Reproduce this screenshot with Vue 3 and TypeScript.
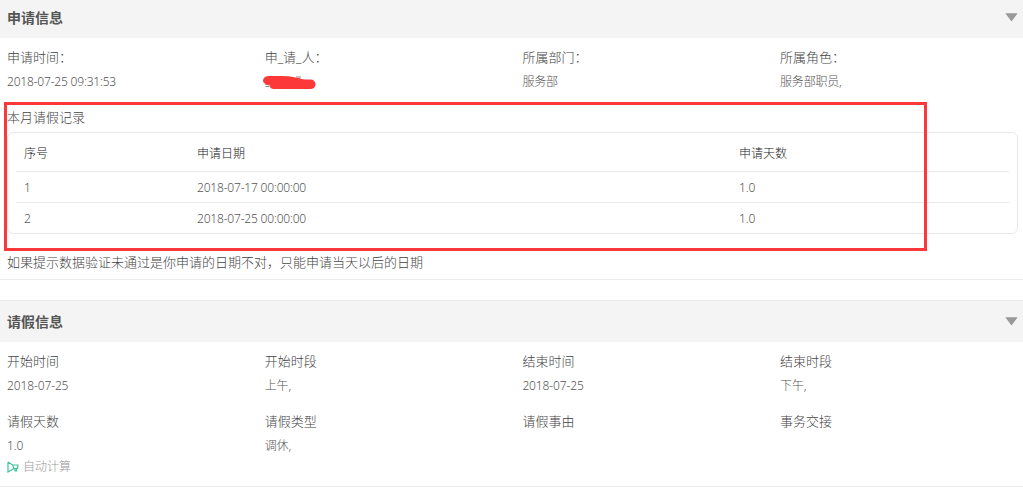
<script setup lang="ts">
import { ref } from 'vue'

interface Field {
  label: string
  value: string
  masked?: boolean
  autoCalc?: boolean
}

interface LeaveRecord {
  id: number
  date: string
  days: string
}

const applyOpen = ref(true)
const leaveOpen = ref(true)

const applyFields: Field[] = [
  { label: '申请时间：', value: '2018-07-25 09:31:53' },
  { label: '申_请_人：', value: '', masked: true },
  { label: '所属部门：', value: '服务部' },
  { label: '所属角色：', value: '服务部职员,' },
]

const records: LeaveRecord[] = [
  { id: 1, date: '2018-07-17 00:00:00', days: '1.0' },
  { id: 2, date: '2018-07-25 00:00:00', days: '1.0' },
]

const leaveFields: Field[] = [
  { label: '开始时间', value: '2018-07-25' },
  { label: '开始时段', value: '上午,' },
  { label: '结束时间', value: '2018-07-25' },
  { label: '结束时段', value: '下午,' },
  { label: '请假天数', value: '1.0', autoCalc: true },
  { label: '请假类型', value: '调休,' },
  { label: '请假事由', value: '' },
  { label: '事务交接', value: '' },
]
</script>

<template>
  <div class="leave-form">
    <section class="panel">
      <header class="panel__header" @click="applyOpen = !applyOpen">
        <h2 class="panel__title">申请信息</h2>
        <svg class="panel__arrow" width="13" height="9" viewBox="0 0 13 9">
          <path d="M0.3 0.3h12.4L6.5 8.5z" fill="#999" />
        </svg>
      </header>

      <div v-if="applyOpen" class="panel__body">
        <div class="fields">
          <div v-for="field in applyFields" :key="field.label" class="field">
            <div class="field__label">{{ field.label }}</div>
            <div class="field__value">
              <svg v-if="field.masked" class="field__mask" width="54" height="16" viewBox="0 0 54 16">
                <path d="M28 1.500H31M33 1H38M34 2.500H37M2.500 8.500H6M2.500 10.500H6.500" stroke="#777" stroke-width="0.900" />
                <path
                  d="M4 .3C7 0 22 0 27 .5C33 1.300 37 2.800 41 3.500H48C54 4 54 12.800 48 13H12C8 13 7 12 7 9.500C4 8.500 0 8 0 4.500C.2 2.200 2 .8 4 .3z"
                  fill="#fd3838"
                />
              </svg>
              <template v-else>{{ field.value }}</template>
            </div>
          </div>
        </div>

        <div class="records">
          <div class="records__title">本月请假记录</div>
          <div class="records__box">
            <table class="records__table">
              <thead>
                <tr>
                  <th class="records__col-id">序号</th>
                  <th class="records__col-date">申请日期</th>
                  <th>申请天数</th>
                </tr>
              </thead>
              <tbody>
                <tr v-for="record in records" :key="record.id">
                  <td>{{ record.id }}</td>
                  <td>{{ record.date }}</td>
                  <td>{{ record.days }}</td>
                </tr>
              </tbody>
            </table>
          </div>
          <div class="records__highlight"></div>
        </div>

        <p class="note">如果提示数据验证未通过是你申请的日期不对，只能申请当天以后的日期</p>
      </div>
    </section>

    <section class="panel panel--next">
      <header class="panel__header" @click="leaveOpen = !leaveOpen">
        <h2 class="panel__title">请假信息</h2>
        <svg class="panel__arrow" width="13" height="9" viewBox="0 0 13 9">
          <path d="M0.3 0.3h12.4L6.5 8.5z" fill="#999" />
        </svg>
      </header>

      <div v-if="leaveOpen" class="panel__body">
        <div class="fields fields--leave">
          <div v-for="field in leaveFields" :key="field.label" class="field">
            <div class="field__label">{{ field.label }}</div>
            <div class="field__value">{{ field.value }}</div>
            <div v-if="field.autoCalc" class="auto-calc">
              <svg width="12" height="12" viewBox="0 0 12 12" fill="none" stroke="#3fc49b" stroke-width="1.200">
                <path d="M1 1V11L7 7.500M1 1L5.500 4H11L10.500 7.500H7L5.500 4M8 7.500V10H9.500V7.500" />
              </svg>
              <span>自动计算</span>
            </div>
          </div>
        </div>
      </div>
    </section>
  </div>
</template>

<style>
body {
  margin: 0;
  background: #fff;
}
</style>

<style scoped>
.leave-form {
  height: 487px;
  overflow: hidden;
  font-family: "Noto Sans", "Noto Sans CJK SC", sans-serif;
  font-weight: 300;
  font-size: 12px;
  color: #555;
}

.panel {
  border-bottom: 1px solid #ebebeb;
}

.panel--next {
  margin-top: 20px;
}

.panel__header {
  display: flex;
  align-items: center;
  justify-content: space-between;
  box-sizing: border-box;
  height: 38px;
  padding: 0 5px 0 7px;
  background: #f4f4f4;
  cursor: pointer;
}

.panel--next .panel__header {
  height: 42px;
  padding-top: 2px;
  border-top: 1px solid #e9e9e9;
}

.panel__title {
  margin: 0 0 2px;
  font-size: 14px;
  line-height: 20px;
  font-weight: 700;
  color: #555;
}

.panel__arrow {
  display: block;
  margin-bottom: 3px;
}

.panel__body {
  padding-top: 8px;
}

.fields {
  display: grid;
  grid-template-columns: repeat(4, 257.7px);
  row-gap: 12px;
  padding-left: 7px;
}

.fields--leave {
  padding-bottom: 10px;
}

.field__label {
  height: 24px;
  line-height: 23px;
  font-size: 13px;
  color: #444;
}

.field__value {
  height: 24px;
  line-height: 24px;
  letter-spacing: -0.19px;
}

.fields--leave .field__value {
  letter-spacing: -0.12px;
}

.field__mask {
  display: block;
  margin: 6px 0 0 -2px;
}

.auto-calc {
  display: flex;
  align-items: center;
  gap: 4px;
  height: 18px;
  line-height: 18px;
  color: #999;
}

.records {
  position: relative;
  margin-top: 6px;
  padding: 0 5px 0 7px;
}

.records__title {
  height: 24px;
  line-height: 23px;
  font-size: 13px;
  color: #444;
}

.records__box {
  margin-top: 2px;
  padding: 0 8px;
  border: 1px solid #e8e8e8;
  border-radius: 6px;
}

.records__table {
  width: 100%;
  table-layout: fixed;
  border-collapse: separate;
  border-spacing: 0;
}

.records__table th,
.records__table td {
  box-sizing: border-box;
  height: 31px;
  padding: 2px 8px 0;
  border-bottom: 1px solid #e8e8e8;
  text-align: left;
  font-weight: 300;
  line-height: 18px;
  letter-spacing: -0.19px;
}

.records__table th {
  height: 39px;
  padding-top: 4px;
  color: #222;
  letter-spacing: 0;
}

.records__table tbody tr:last-child td {
  height: 30px;
  border-bottom: none;
}

.records__col-id {
  width: 173px;
}

.records__col-date {
  width: 542px;
}

/* frame drawn over the records block */
.records__highlight {
  position: absolute;
  top: -4px;
  left: 4px;
  box-sizing: border-box;
  width: 923px;
  height: 149px;
  border: 3px solid #fd3838;
  pointer-events: none;
}

.note {
  margin: 16px 0 0;
  padding: 0 7px 5px;
  font-size: 13px;
  line-height: 24px;
  color: #444;
}
</style>
